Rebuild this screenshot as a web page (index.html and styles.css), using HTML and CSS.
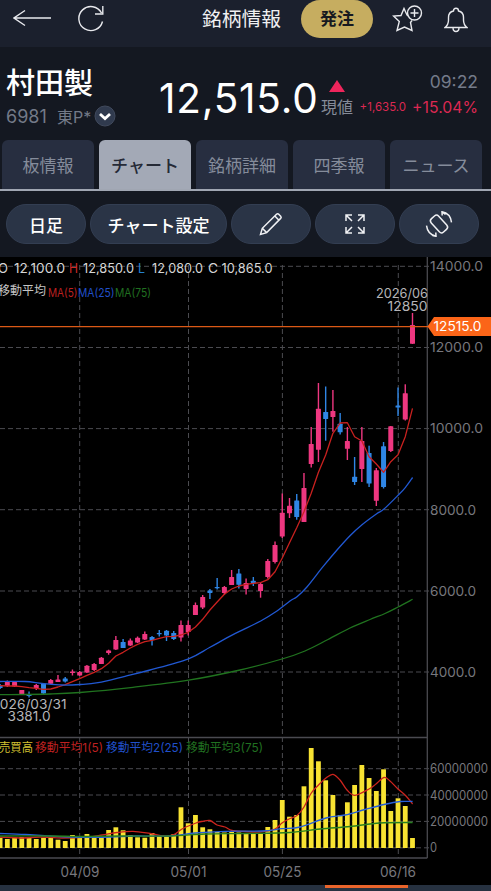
FILE: index.html
```html
<!DOCTYPE html>
<html lang="ja">
<head>
    <meta charset="UTF-8">
    <meta name="viewport" content="width=device-width, initial-scale=1.0">
    <title>銘柄情報</title>
    <link rel="stylesheet" href="styles.css">
</head>
<body>
    <header class="header">
        <svg class="icon-back" width="38" height="18" viewBox="0 0 38 18"><path d="M12 1.500 1 9l11 7.500M1 9h37"/></svg>
        <svg class="icon-reload" width="28" height="28" viewBox="0 0 28 28"><path d="M25.500 17.500A12 12 0 1 1 24.500 9M25.800 2v8H18"/></svg>
        <h1 class="title">銘柄情報</h1>
        <button class="order-button">発注</button>
        <svg class="icon-star" width="32" height="28" viewBox="0 0 32 28">
            <path d="M16.200 10.500 15 10 12 3.500 9 10.500 1.500 11l5.800 5.500L5 25.500l7.500-3.500 7.500 3.500-1.500-8 1.500-2"/>
            <circle cx="22.500" cy="8" r="7"/>
            <path d="M22.500 4v8M18.500 8h8"/>
        </svg>
        <svg class="icon-bell" width="24" height="26" viewBox="0 0 24 26">
            <path d="M1 20.500q3.500-2.800 3.500-7.500V10.500q0-5.500 5-6.500Q9.500 1.300 12 1.300T14.500 4q5 1 5 6.500V13q0 4.700 3.500 7.500ZM9 20.500q0 4 3 4t3-4"/>
        </svg>
    </header>

    <section class="quote">
        <div class="stock">
            <h2 class="stock-name">村田製</h2>
            <div class="stock-code">
                <span class="code">6981</span>
                <span class="market">東P*</span>
                <svg width="22" height="22" viewBox="0 0 22 22"><circle cx="11" cy="11" r="10"/><path d="m6 9 5 4.500L16 9"/></svg>
            </div>
        </div>
        <div class="price">12,515.0</div>
        <div class="price-mark">
            <span class="up"></span>
            <span class="price-label">現値</span>
        </div>
        <div class="change">
            <div class="time">09:22</div>
            <div class="change-values">
                <span class="diff">+1,635.0</span>
                <span class="rate">+15.04%</span>
            </div>
        </div>
    </section>

    <nav class="tabs">
        <a class="tab">板情報</a>
        <a class="tab active">チャート</a>
        <a class="tab">銘柄詳細</a>
        <a class="tab">四季報</a>
        <a class="tab">ニュース</a>
    </nav>

    <div class="toolbar">
        <button class="tool">日足</button>
        <button class="tool wide">チャート設定</button>
        <button class="tool">
            <svg width="24" height="24" viewBox="0 0 24 24"><path d="m1.500 22.500 1.800-6.200L17.500 2.200q1-1 2.200 0l2 2q1 1.200 0 2.200L7.700 20.600ZM3.300 16.300l4.400 4.300M15.800 4l4.200 4.200"/></svg>
        </button>
        <button class="tool">
            <svg width="20" height="20" viewBox="0 0 20 20"><path d="M1 7V1h6M1 1l6 6M13 1h6v6M19 1l-6 6M1 13v6h6M1 19l6-6M19 13v6h-6M19 19l-6-6"/></svg>
        </button>
        <button class="tool">
            <svg width="28" height="26" viewBox="0 0 28 26"><rect x="9" y="4" width="10" height="18" rx="3" transform="rotate(-42 14 13)"/><path d="M17.200 4.500 17 .8q8.300 1.500 9.500 10.500M20.500 3.500 17 .8M10.800 21.500l.2 3.700Q2.700 23.700 1.500 14.700M7.500 24.500l3.500.7"/></svg>
        </button>
    </div>

    <main class="chart">
        <svg id="chart" width="491" height="628" viewBox="0 257 491 628"></svg>
    </main>
    <div class="bottom-bar"><div class="indicator"></div></div>

    <script src="chart.js"></script>
</body>
</html>
```
FILE: styles.css
```css
* {
    box-sizing: border-box;
}
body {
    margin: 0;
    height: 891px;
    overflow: hidden;
    background-color: #141821;
    color: #fff;
    font-family: Inter, "Noto Sans CJK JP", sans-serif;
}
h1, h2 {
    margin: 0;
    font-weight: 400;
}
svg {
    display: block;
    flex: none;
    fill: none;
}
button {
    padding: 0;
    border: none;
    color: #fff;
    font-family: inherit;
}

/* ヘッダー */
.header {
    display: flex;
    height: 47px;
    padding: 0 0 9px 13px;
    align-items: center;
    background-color: #1b202d;
}
.header svg {
    stroke: #e8e9ed;
    stroke-width: 1.4;
}
.icon-back {
    margin-top: -3px;
}
.icon-reload {
    margin: -2px 0 0 26px;
}
.title {
    width: 80px;
    margin-left: 97px;
    color: #f0f0f2;
    font-size: 19.800px;
    line-height: 38px;
    white-space: nowrap;
}
.order-button {
    width: 72px;
    height: 38px;
    margin-left: 19px;
    border-radius: 19px;
    background-color: #c6ad60;
    color: #17191f;
    font-size: 17px;
    font-weight: 700;
    line-height: 35px;
}
.icon-star {
    margin-left: 19px;
}
.header .icon-bell {
    margin: 2px 0 0 20px;
}

/* 株価 */
.quote {
    display: flex;
    height: 93px;
}
.stock {
    width: 159px;
    padding: 21px 0 0 6px;
}
.stock-name {
    height: 36px;
    font-size: 29px;
    font-weight: 500;
    line-height: 32px;
}
.stock-code {
    display: flex;
    align-items: center;
    height: 24px;
    color: #737a88;
    font-size: 18px;
}
.code {
    width: 51px;
}
.market {
    width: 37px;
    font-size: 16px;
    white-space: nowrap;
}
.stock-code circle {
    fill: #303a4e;
    stroke: #414a5d;
}
.stock-code path {
    stroke: #fff;
    stroke-width: 2.800;
}
.price {
    width: 162px;
    padding-top: 28px;
    font-size: 40.500px;
    line-height: 48px;
    letter-spacing: 0.800px;
}
.price-mark {
    width: 36px;
    padding-top: 33px;
}
.up {
    display: block;
    margin-left: 8px;
    border-right: 8px solid transparent;
    border-bottom: 12px solid #ef255c;
    border-left: 8px solid transparent;
    width: 0;
}
.price-label {
    display: block;
    margin-top: 4px;
    color: #858b98;
    font-size: 16px;
    line-height: 22px;
}
.change {
    width: 121px;
    padding-top: 23px;
    color: #dc2852;
    text-align: right;
}
.time {
    height: 24px;
    color: #747b8a;
    font-size: 17.500px;
    line-height: 24px;
}
.change-values {
    display: flex;
    justify-content: flex-end;
    align-items: center;
    gap: 6px;
    height: 26px;
}
.diff {
    font-size: 11.500px;
}
.rate {
    font-size: 15.800px;
}

/* タブ */
.tabs {
    display: flex;
    gap: 5px;
    height: 51px;
    padding: 0 9px 0 2px;
    border-bottom: 2px solid #a0a6b2;
}
.tab {
    flex: 1;
    border-radius: 6px 6px 0 0;
    background-color: #272e40;
    color: #858c9b;
    font-size: 17px;
    line-height: 53px;
    text-align: center;
    white-space: nowrap;
}
.tab.active {
    background-color: #a3a9b6;
    color: #252a36;
    font-weight: 500;
}

/* ツールバー */
.toolbar {
    display: flex;
    gap: 4px;
    height: 66px;
    padding: 13px 13px 13px 6px;
}
.tool {
    display: flex;
    flex: 0 0 80px;
    align-items: center;
    justify-content: center;
    border: 1px solid #333e52;
    border-radius: 20px;
    background-color: #2a3446;
    font-size: 17px;
    font-weight: 500;
}
.tool.wide {
    flex: 0 0 137px;
}
.tool svg {
    stroke: #f0f1f4;
    stroke-width: 1.500;
}

/* チャート */
.chart {
    height: 628px;
    background-color: #000;
}
.chart text {
    white-space: pre;
}
.grid {
    stroke: #4b4b50;
    stroke-dasharray: 5 3;
}
.axis {
    stroke: #4a4a50;
    stroke-width: 1.300;
}
.line {
    stroke-width: 1.300;
    stroke-linejoin: round;
}
.bottom-bar {
    height: 6px;
    background-color: #263140;
}
.indicator {
    width: 83px;
    height: 3px;
    margin-left: 325px;
    background-color: #e9642b;
}
```
FILE: chart.js
```js
const svg = document.getElementById("chart");
const PINK = "#ee3780";
const BLUE = "#2f86e5";
const xOf = i => 0.1 + i * 7.235;

function add(tag, attrs, text) {
    const el = document.createElementNS("http://www.w3.org/2000/svg", tag);
    for (const key in attrs) el.setAttribute(key, attrs[key]);
    if (text) el.textContent = text;
    svg.appendChild(el);
    return el;
}
function line(x1, y1, x2, y2, cls) {
    add("line", { x1, y1, x2, y2, class: cls });
}
function label(x, y, text, size, width, fill) {
    add("text", { x, y, "font-size": size, fill, textLength: width, lengthAdjust: "spacingAndGlyphs" }, text);
}
function polyline(points, stroke) {
    add("polyline", { points: points.map(p => p.join(",")).join(" "), stroke, class: "line" });
}
// Catmull-Romで滑らかな曲線にする
function curve(p, stroke) {
    let d = `M${p[0]}`;
    for (let i = 0; i < p.length - 1; i++) {
        const a = p[i - 1] || p[i], b = p[i], c = p[i + 1], e = p[i + 2] || c;
        d += `C${b[0] + (c[0] - a[0]) / 6},${b[1] + (c[1] - a[1]) / 6} ${c[0] - (e[0] - b[0]) / 6},${c[1] - (e[1] - b[1]) / 6} ${c}`;
    }
    add("path", { d, stroke, class: "line" });
}

// グリッド
[266.3, 347.5, 428.6, 509.7, 591, 672].forEach(y => line(0, y, 432, y, "grid"));
[768.7, 795, 821.4, 847.8].forEach(y => line(0, y, 432, y, "grid"));
[79.7, 188.5, 282.4, 398.3].forEach(x => line(x, 265, x, 858, "grid"));
line(0, 737.5, 427.3, 737.5, "axis");
line(0, 858, 427.3, 858, "axis");
line(427.3, 257, 427.3, 858, "axis");

// ローソク足: 色, 実体上, 実体下, ヒゲ上, ヒゲ下
const candles = [
    ["b", 685, 688, 684, 689], ["p", 682, 686, 680.5, 687], ["p", 682, 686.5, 681, 687],
    ["p", 690, 694, 690, 694], ["b", 694, 696, 691.5, 697.5], ["p", 685, 688, 684, 690],
    ["b", 683.5, 693.5, 683, 694], ["p", 680, 683.7, 679, 684], ["p", 679.5, 682, 675, 682],
    ["b", 678.5, 681.5, 677, 682.5], ["p", 671.5, 673, 669.5, 675.5], ["p", 672, 675.5, 671, 676],
    ["p", 665.7, 672.5, 665, 673], ["p", 664, 670, 663, 671], ["p", 657.7, 664, 657, 664],
    ["p", 650.5, 653, 649.7, 654.7], ["p", 640, 649.5, 636, 650], ["b", 642, 648, 639, 648],
    ["p", 640.5, 645.5, 638.5, 646], ["p", 637.7, 642.5, 636.5, 643], ["p", 634, 639.5, 631.5, 640],
    ["b", 637, 640, 636, 645.5], ["b", 633, 634.3, 630, 636.5], ["b", 630.7, 635.5, 630, 641],
    ["b", 633, 639, 631, 640], ["p", 625, 637.5, 620.5, 641.5], ["p", 625, 632, 620.5, 635.5],
    ["p", 605, 615, 602.5, 615], ["p", 597, 607.5, 595, 609], ["b", 590.5, 593, 589, 599],
    ["b", 587, 588.3, 578, 589.5], ["p", 587, 593, 586, 595], ["p", 577, 585, 570, 585],
    ["b", 573.5, 584.7, 569, 588.5], ["p", 583, 589, 578.5, 594.5], ["b", 580.7, 583, 577, 586],
    ["p", 584, 591, 582.5, 597.7], ["p", 561, 577, 559, 578.5], ["p", 545, 562, 541.5, 563.5],
    ["p", 512.7, 536.5, 493.5, 538], ["p", 505.7, 513.3, 498, 518], ["b", 500.5, 517, 494, 519.7],
    ["p", 488, 522, 473, 522], ["p", 444, 464, 427, 467.5], ["p", 408.7, 449.7, 383, 462],
    ["b", 412, 419, 386.5, 440.7], ["p", 411, 417, 390, 431.7], ["b", 423.7, 432.3, 413, 434.5],
    ["p", 441, 448.7, 427, 460], ["b", 476.7, 482, 457, 485], ["p", 441, 469, 427, 482],
    ["b", 453, 483.5, 445.7, 487], ["p", 470.3, 500.7, 468, 506], ["b", 446.3, 487, 442, 488.5],
    ["p", 426.3, 451, 426, 452], ["b", 405.5, 407.5, 387.5, 416], ["p", 393.3, 419.5, 384.3, 420.5],
    ["p", 325, 343.7, 313, 344]
];
candles.forEach(([c, top, bottom, high, low], i) => {
    const fill = c === "p" ? PINK : BLUE;
    add("rect", { x: xOf(i) - 0.7, y: high, width: 1.4, height: low - high, fill });
    add("rect", { x: xOf(i) - 2.5, y: top, width: 5, height: bottom - top, rx: 0.5, fill });
});

// 移動平均線
const ma5 = [685.7, 686, 686, 686.7, 687.7, 688.3, 689.3, 689, 687, 684.7, 681.7, 678.7, 675.3, 672.3,
    668.7, 663.3, 656, 652.3, 648, 644.3, 641.7, 640.3, 638.3, 636.7, 636.3, 635, 632.3, 627,
    619.3, 610, 602, 594.3, 589, 586, 584.3, 583.3, 582.7, 579.7, 571.7, 558, 542.7, 527.7,
    511.7, 493.3, 472.3, 455, 433.3, 423, 422.7, 436.7, 441, 456.7, 464, 472.3, 461.7, 454.7, 436.7, 408.3];
polyline(ma5.map((y, i) => [xOf(i), y]), "#c9211f");
curve([[0, 681.5], [25, 681.5], [42, 683.3], [62, 685], [80, 684.5], [98, 682.7], [125, 676.3],
    [150, 670], [188.5, 658.8], [210, 647.3], [233, 634.7], [260.7, 621], [275, 612.3], [290, 601],
    [297, 596.7], [306.7, 587.3], [323, 566.7], [337, 550], [350, 535.7], [362, 524.7], [376.7, 513.7],
    [383.7, 509.3], [398.3, 495], [405.5, 487.3], [412.6, 477.5]], "#2158d2");
curve([[0, 694.7], [50, 694], [80, 692.5], [133, 687.3], [188.5, 680.2], [240, 670], [282, 659],
    [305, 651], [328, 639.5], [350, 628], [370, 619.5], [385, 613.5], [398, 607], [412.6, 599.3]], "#20731f");

// 売買高
const volume = [837.7, 839, 837.7, 837, 838, 839, 837.7, 837.7, 839.7, 841, 835, 836, 834, 837.7, 837.7,
    830, 827.3, 830.3, 835, 837.3, 837.7, 833, 836, 836.7, 834.3, 807.3, 823.3, 815, 827.3, 829.3,
    832, 832.5, 832, 832.5, 834, 833.5, 833.5, 827, 820, 800, 816.7, 815, 786.3, 748, 761.3, 780.3,
    795, 815, 802.3, 785, 765, 778, 791, 769.3, 811, 798.3, 806, 838];
volume.forEach((y, i) => add("rect", { x: xOf(i) - 2.4, y, width: 4.8, height: 848 - y, fill: "#f8e332" }));
curve([[0, 837], [22, 838], [40, 837], [62, 838], [87, 837], [102, 835], [117, 832.5], [133, 831.3],
    [150, 833.5], [164, 836], [174, 834.5], [182, 829], [196, 823], [203, 821.3], [210, 820.5],
    [217, 825], [225, 827], [232, 830.5], [245, 831.5], [260, 832], [275, 829], [282, 823], [289, 819],
    [297, 815.5], [304, 807], [311, 793.5], [318, 785.5], [326, 778], [333, 774.3], [340, 780],
    [347, 790], [355, 795.3], [369, 789], [376, 784], [384, 777.5], [390, 781], [398, 789], [406, 796], [412.6, 804]], "#cc241d");
curve([[0, 833.5], [25, 834.5], [50, 836], [80, 837.3], [110, 837], [135, 836], [170, 836], [195, 833],
    [225, 831.3], [262, 831], [282, 828.7], [300, 827], [326, 818], [345, 815], [365, 809.5],
    [384, 804.5], [400, 801.5], [412.6, 801.5]], "#2860d8");
curve([[0, 836], [50, 836], [80, 836.5], [120, 836], [170, 836], [205, 834], [245, 833.5], [290, 832.5],
    [320, 829], [350, 826.5], [380, 823], [412.6, 822.5]], "#28801f");

// 現在値
add("path", { d: "M0 326.600H428", stroke: "#db5916", "stroke-width": 1.3 });
add("path", { d: "M427.500 326.500 434 317H491V336H434Z", fill: "#fb6518" });
label(433.5, 330.5, "12515.0", 13, 48, "#fff");

// 四本値と凡例
label(-2, 273, "O", 13, 10, "#d6d6d6");
label(14, 273, "12,100.0", 13, 51, "#d6d6d6");
label(69, 273, "H", 13, 9, "#cf2926");
label(83, 273, "12,850.0", 13, 51, "#d6d6d6");
label(138, 273, "L", 13, 7, "#2480cf");
label(152, 273, "12,080.0", 13, 51, "#d6d6d6");
label(208, 273, "C", 13, 10, "#d6d6d6");
label(221.5, 273, "10,865.0", 13, 51, "#d6d6d6");
label(-2, 295, "移動平均", 12, 48, "#c4c4c4");
label(48, 296.5, "MA(5)", 11.5, 29.5, "#bd2020");
label(78, 296.5, "MA(25)", 11.5, 36.5, "#2050ca");
label(115, 296.5, "MA(75)", 11.5, 36, "#207020");
label(-1, 752, "売買高", 12, 34, "#d4c232");
label(35, 752, "移動平均1(5)", 12, 68, "#bd2020");
label(106, 752, "移動平均2(25)", 12, 77, "#2050ca");
label(186, 752, "移動平均3(75)", 12, 77, "#207020");

// 高値・安値
label(376, 298, "2026/06", 13.5, 52, "#b5b5b8");
label(387.5, 310.5, "12850", 13.5, 40, "#b5b5b8");
label(-8.5, 709, "2026/03/31", 13.5, 75, "#b5b5b8");
label(7.5, 721, "3381.0", 13.5, 43, "#b5b5b8");

// 軸ラベル
[["14000.0", 271, 53], ["12000.0", 352, 53], ["10000.0", 433.2, 53], ["8000.0", 514.5, 46],
    ["6000.0", 595.7, 46], ["4000.0", 676.8, 46]].forEach(([t, y, w]) => label(430, y, t, 13.5, w, "#77777d"));
[["60000000", 773, 58], ["40000000", 799.5, 58], ["20000000", 826, 58], ["0", 852.4, 7]]
    .forEach(([t, y, w]) => label(430, y, t, 12.5, w, "#77777d"));
[["04/09", 60.5, 39], ["05/01", 170.5, 36], ["05/25", 263.5, 38], ["06/16", 380, 36]]
    .forEach(([t, x, w]) => label(x, 877, t, 14, w, "#77777d"));
```
